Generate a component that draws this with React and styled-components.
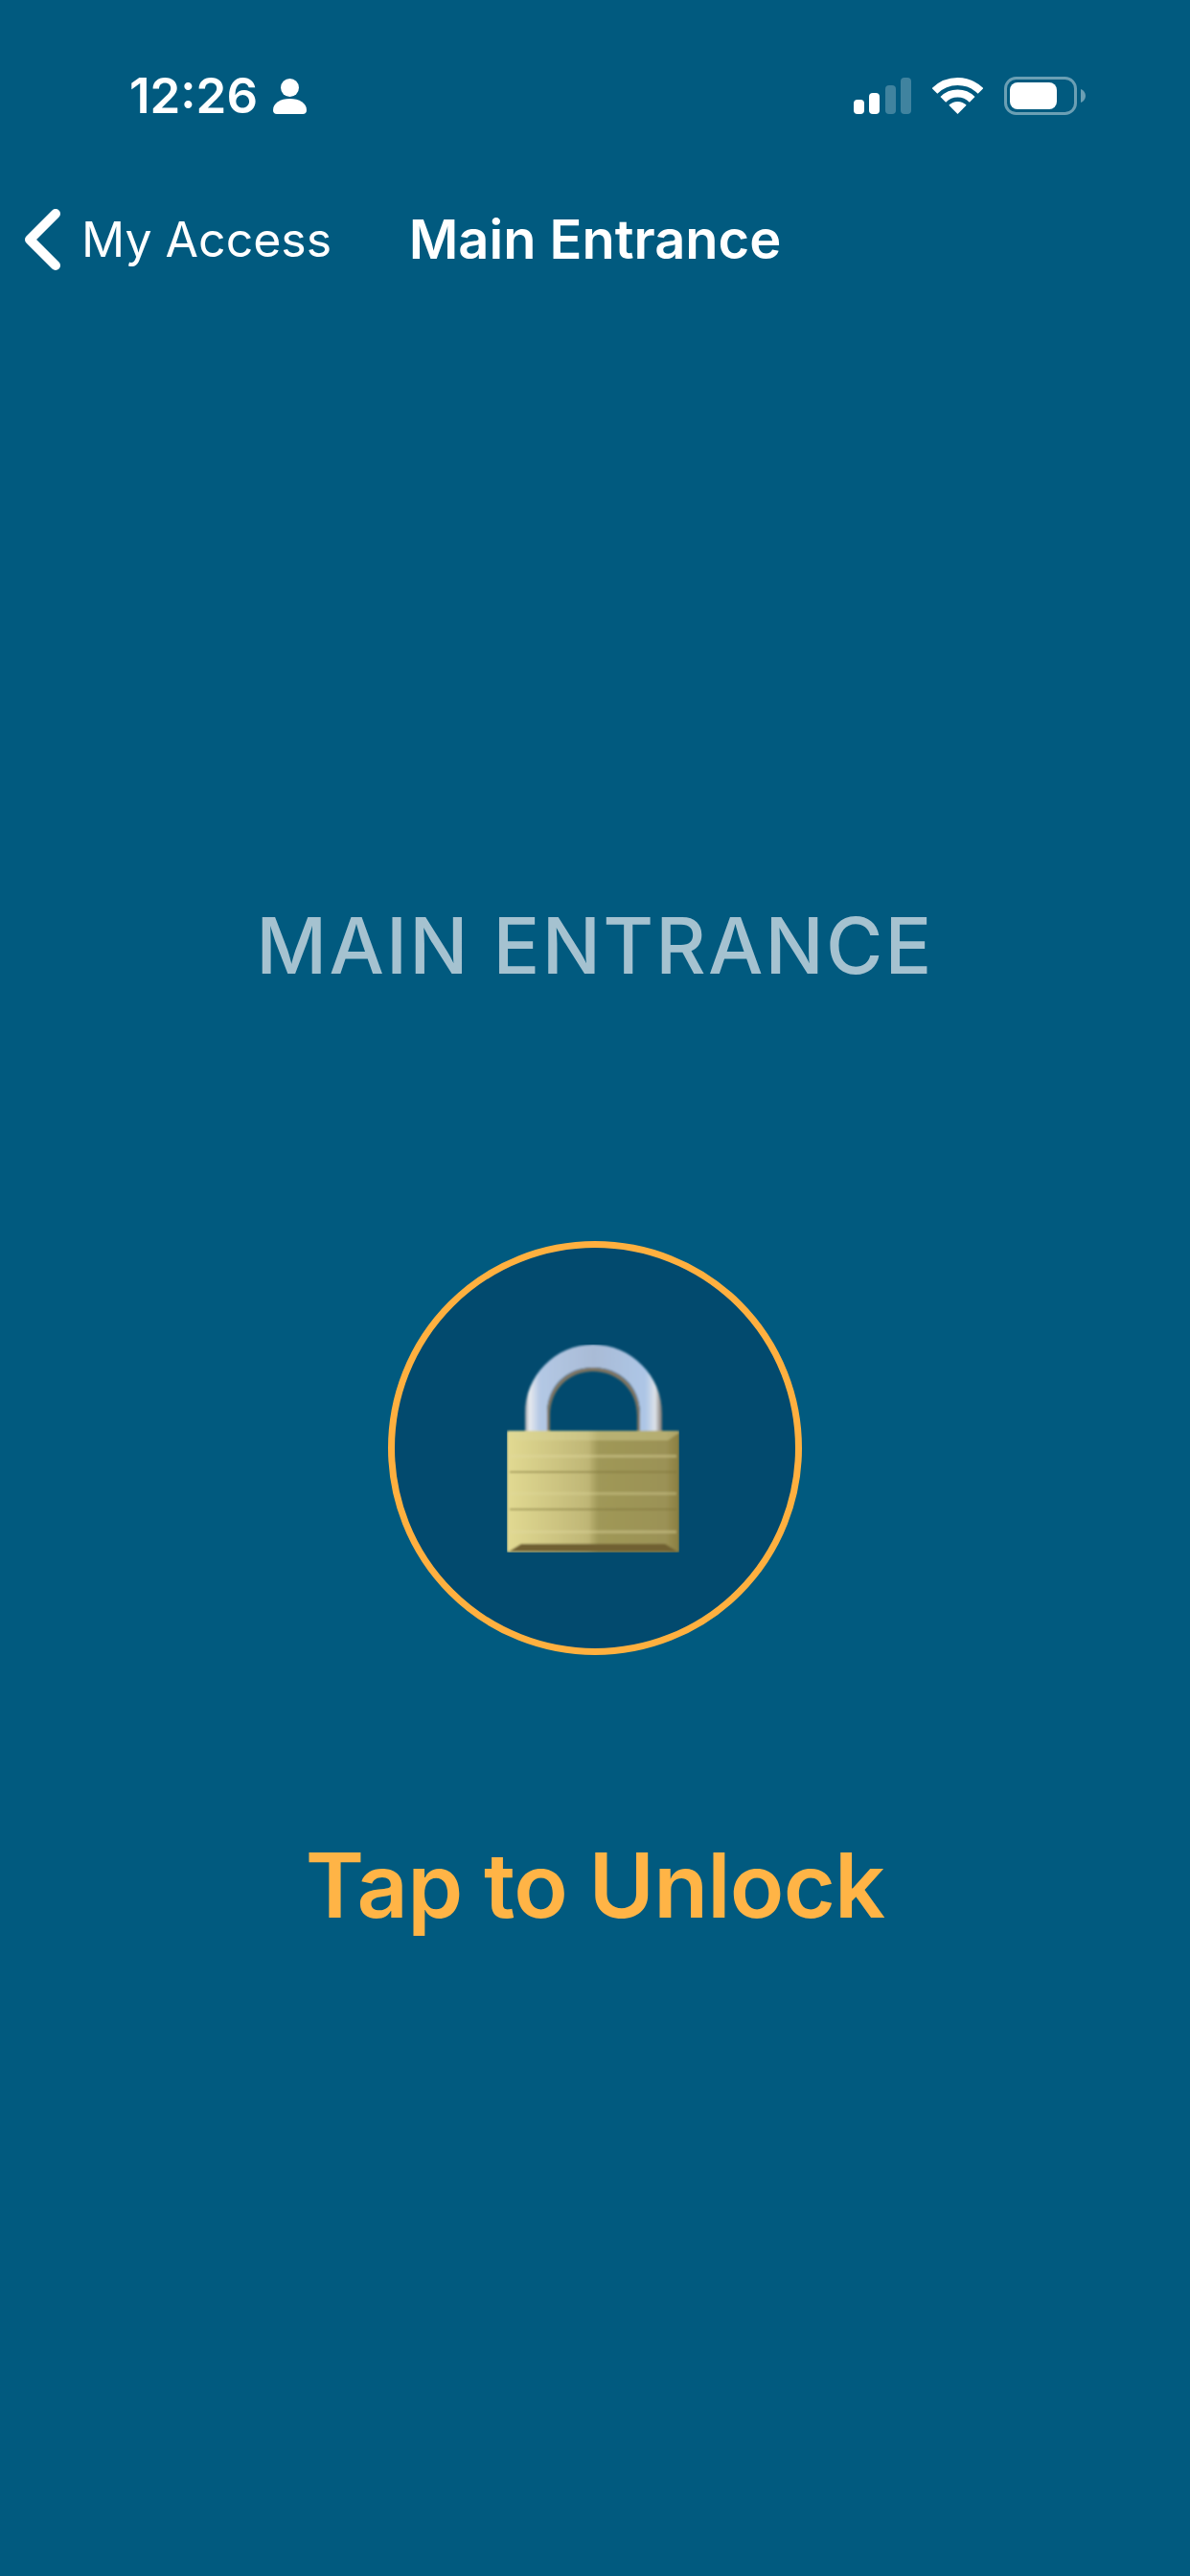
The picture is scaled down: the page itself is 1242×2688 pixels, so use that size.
import styled, { createGlobalStyle } from "styled-components";

const GlobalStyle = createGlobalStyle`
    html, body {
        margin: 0;
        padding: 0;
        background: #015a7f;
    }
`;

const Page = styled.div`
    display: flex;
    flex-direction: column;
    width: 1242px;
    height: 2688px;
    padding-top: 80px;
    box-sizing: border-box;
    overflow: hidden;
    background: #015a7f;
    color: #fff;
    font-family: Inter, "Liberation Sans", sans-serif;
`;

const StatusBar = styled.header`
    display: flex;
    justify-content: space-between;
    align-items: center;
    height: 40px;
    padding: 0 109px 0 135px;
`;

const StatusGroup = styled.div`
    display: flex;
    align-items: center;
    gap: ${props => props.$gap}px;
`;

const Clock = styled.span`
    font-size: 51px;
    font-weight: 600;
    line-height: 40px;
`;

const SignalBars = styled.div`
    display: flex;
    align-items: flex-end;
    gap: 5.5px;
    height: 38px;
`;

const SignalBar = styled.i`
    display: block;
    width: 11px;
    height: ${props => props.$height}px;
    border-radius: 4px;
    background: ${props => props.$on ? "#fff" : "rgba(255, 255, 255, 0.25)"};
`;

const NavBar = styled.nav`
    display: grid;
    grid-template-columns: minmax(0, 1fr) auto minmax(0, 1fr);
    align-items: center;
    height: 80px;
    margin-top: 90px;
    padding: 0 26px;
`;

const BackLink = styled.a`
    display: flex;
    align-items: center;
    gap: 22px;
    color: #fff;
    font-size: 50px;
    font-weight: 400;
    line-height: 80px;
    white-space: nowrap;
`;

const NavTitle = styled.h1`
    margin: 0;
    font-size: 56px;
    font-weight: 600;
    line-height: 80px;
    white-space: nowrap;
`;

const LockPanel = styled.main`
    display: flex;
    flex-direction: column;
    align-items: center;
    margin-top: 647px;
`;

const DoorLabel = styled.h2`
    margin: 0;
    color: #a5c2d0;
    font-size: 81px;
    font-weight: 500;
    line-height: 100px;
    letter-spacing: 2.2px;
    white-space: nowrap;
`;

const LockButton = styled.button`
    display: flex;
    justify-content: center;
    align-items: center;
    width: 432px;
    height: 432px;
    margin-top: 258px;
    padding: 0;
    box-sizing: border-box;
    border: 7px solid #ffb03f;
    border-radius: 50%;
    background: #024a6e;
`;

const Padlock = styled.svg`
    display: block;
    flex: none;
    margin-right: 5px;
`;

const Hint = styled.p`
    margin: 180px 0 0;
    color: #ffb446;
    font-size: 93px;
    font-weight: 600;
    line-height: 120px;
    letter-spacing: -0.8px;
    white-space: nowrap;
`;

const PersonIcon = () => (
    <svg width="35" height="37" viewBox="0 0 35 37" fill="#fff">
        <circle cx="17.5" cy="9.5" r="9.5" />
        <path d="M0 33c0-7.500 7.500-12 17.500-12S35 25.500 35 33c0 2.500-1.500 4-4 4H4c-2.500 0-4-1.500-4-4z" />
    </svg>
);

const WifiIcon = () => (
    <svg width="53" height="38" viewBox="0 0 53 38" fill="none" stroke="#fff" strokeWidth="8">
        <path d="M2.500 14a34 34 0 0 1 48 0" />
        <path d="M11.300 22.800a21.500 21.500 0 0 1 30.400 0" />
        <path d="M17.300 28.800a13 13 0 0 1 18.400 0L26.500 38z" fill="#fff" stroke="none" />
    </svg>
);

const BatteryIcon = () => (
    <svg width="85" height="40" viewBox="0 0 85 40">
        <rect x="1.500" y="1.500" width="73" height="37" rx="11" fill="none" stroke="#fff" strokeOpacity="0.42" strokeWidth="3" />
        <rect x="6" y="6" width="49" height="28" rx="8" fill="#fff" />
        <path d="M80 13c3 1 5 4 5 7s-2 6-5 7z" fill="#fff" fillOpacity="0.42" />
    </svg>
);

const BackChevron = () => (
    <svg width="37" height="64" viewBox="0 0 37 64" fill="none" stroke="#fff" strokeWidth="10" strokeLinecap="round" strokeLinejoin="round">
        <path d="M32 5L5 32l27 27" />
    </svg>
);

// stripes cut into the brass face, y positions inside the padlock's viewBox
const brassStripes = [
    { y: 115, h: 3, fill: "#e0da9f", opacity: 0.4 },
    { y: 132, h: 2, fill: "#7d7439", opacity: 0.55 },
    { y: 154, h: 3, fill: "#e0da9f", opacity: 0.35 },
    { y: 171, h: 2, fill: "#7d7439", opacity: 0.55 },
    { y: 194, h: 3, fill: "#e0da9f", opacity: 0.4 },
];

// brass padlock with a steel shackle
const PadlockIcon = () => (
    <Padlock width="180" height="217" viewBox="0 0 180 217">
        <defs>
            <linearGradient id="steel" x1="0" x2="1" y1="0" y2="0">
                <stop offset="0" stopColor="#8e96a0" />
                <stop offset="0.03" stopColor="#e8eaee" />
                <stop offset="0.11" stopColor="#b3c8e4" />
                <stop offset="0.5" stopColor="#a9bbd6" />
                <stop offset="0.88" stopColor="#adc6e6" />
                <stop offset="0.95" stopColor="#dde2e8" />
                <stop offset="1" stopColor="#77706a" />
            </linearGradient>
            <linearGradient id="brass" x1="0" x2="1" y1="0" y2="0">
                <stop offset="0" stopColor="#e2da92" />
                <stop offset="0.47" stopColor="#bfb676" />
                <stop offset="0.53" stopColor="#a09858" />
                <stop offset="0.92" stopColor="#9b9256" />
                <stop offset="1" stopColor="#8a7d3f" />
            </linearGradient>
            <filter id="soft">
                <feGaussianBlur stdDeviation="0.8" />
            </filter>
        </defs>
        <g filter="url(#soft)">
            <path d="M19 91V72C19 33 50 0 90 0s72 33 72 72v19h-23V72c0-28-21-48-49-48S42 44 42 72v19z" fill="url(#steel)" />
            <path d="M42 91V72c0-28 21-48 48-48s49 20 49 48v19h-3V74c0-26-20-46-46-46S45 48 45 74v17z" fill="#7f7562" />
            <rect x="0" y="90" width="180" height="127" rx="2" fill="url(#brass)" />
            <path d="M0 92l12 8h156l12-8v-2H0z" fill="#dcd69a" opacity="0.4" />
            {brassStripes.map(stripe => (
                <rect
                    key={stripe.y}
                    x="3"
                    y={stripe.y}
                    width="174"
                    height={stripe.h}
                    fill={stripe.fill}
                    opacity={stripe.opacity}
                />
            ))}
            <path d="M2 216l13-8h150l13 8z" fill="#6f6030" />
        </g>
    </Padlock>
);

const signal = [
    { height: 15, on: true },
    { height: 22, on: true },
    { height: 30, on: false },
    { height: 38, on: false },
];

const App = () => {
    return (
        <Page>
            <GlobalStyle />
            <StatusBar>
                <StatusGroup $gap={16}>
                    <Clock>12:26</Clock>
                    <PersonIcon />
                </StatusGroup>
                <StatusGroup $gap={22}>
                    <SignalBars>
                        {signal.map(bar => (
                            <SignalBar key={bar.height} $height={bar.height} $on={bar.on} />
                        ))}
                    </SignalBars>
                    <WifiIcon />
                    <BatteryIcon />
                </StatusGroup>
            </StatusBar>
            <NavBar>
                <BackLink>
                    <BackChevron />
                    My Access
                </BackLink>
                <NavTitle>Main Entrance</NavTitle>
            </NavBar>
            <LockPanel>
                <DoorLabel>MAIN ENTRANCE</DoorLabel>
                <LockButton>
                    <PadlockIcon />
                </LockButton>
                <Hint>Tap to Unlock</Hint>
            </LockPanel>
        </Page>
    );
};

export default App;
